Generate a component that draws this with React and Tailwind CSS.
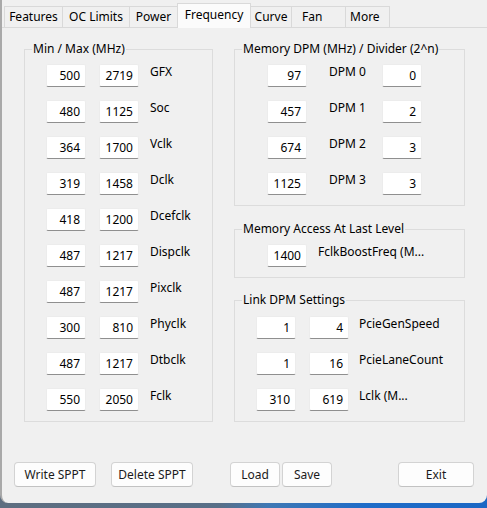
import React from 'react';

const tabs = [
    { name: 'Features', w: 'w-[59px]', cls: 'justify-center' },
    { name: 'OC Limits', w: 'w-[67px]', cls: 'justify-center' },
    { name: 'Power', w: 'w-[48px]', cls: 'justify-center' },
    { name: 'Frequency', w: 'w-[74px]', cls: 'justify-center', active: true },
    { name: 'Curve', w: 'w-[41px]', cls: 'justify-center' },
    { name: 'Fan', w: 'w-[54px]', cls: 'pl-[10px]' },
    { name: 'More', w: 'w-[44px]', cls: 'pl-[4px]' },
];

const clocks = [
    ['500', '2719', 'GFX'],
    ['480', '1125', 'Soc'],
    ['364', '1700', 'Vclk'],
    ['319', '1458', 'Dclk'],
    ['418', '1200', 'Dcefclk'],
    ['487', '1217', 'Dispclk'],
    ['487', '1217', 'Pixclk'],
    ['300', '810', 'Phyclk'],
    ['487', '1217', 'Dtbclk'],
    ['550', '2050', 'Fclk'],
];

const memDpm = [
    ['97', 'DPM 0', '0'],
    ['457', 'DPM 1', '2'],
    ['674', 'DPM 2', '3'],
    ['1125', 'DPM 3', '3'],
];

const linkDpm = [
    ['1', '4', 'PcieGenSpeed'],
    ['1', '16', 'PcieLaneCount'],
    ['310', '619', 'Lclk (M...'],
];

const Field = ({ value, className = '' }) => (
    <div className={`w-[40px] h-[23px] shrink-0 bg-white border border-[#ececec] border-b-[#8f8f8f] rounded-[2px] text-right pr-[5px] leading-[22px] ${className}`}>
        {value}
    </div>
);

const Group = ({ title, className = '', children }) => (
    <div className={`relative border border-[#dcdcdc] ${className}`}>
        <span className="absolute left-[7px] top-[-9px] px-[1px] bg-[#f0f0f0] leading-[16px] whitespace-nowrap">{title}</span>
        {children}
    </div>
);

const Button = ({ label, className = '' }) => (
    <button className={`h-[25px] bg-[#fdfdfd] border border-[#d3d3d3] border-b-[#c2c2c2] rounded-[4px] text-[12px] text-[#1b1b1b] ${className}`}>
        {label}
    </button>
);

export default function App() {
    return (
        <div className="w-[487px] h-[508px] overflow-hidden bg-[linear-gradient(90deg,#5e6e80_0%,#586f88_45%,#3f78b4_55%,#1f6cc8_75%,#1b67c4_100%)] font-['Noto_Sans',sans-serif] text-[12px] text-black">
            <div className="w-[487px] h-[503px] bg-[#f0f0f0] border-l-[2px] border-[#a9a9a9] rounded-bl-[8px] rounded-br-[8px] flex flex-col">
                {/* Tab strip */}
                <div className="flex items-end h-[28px] pl-[2px] border-b border-[#d9d9d9]">
                    {tabs.map(t => (
                        <div
                            key={t.name}
                            className={`${t.w} flex items-center border-t border-r border-[#d9d9d9] first:border-l ${t.cls} ${t.active
                                ? 'h-[25px] bg-[#fbfbfb] -mb-px pb-[3px] border-l -ml-px'
                                : 'h-[21px] bg-[#f0f0f0]'}`}
                        >
                            {t.name}
                        </div>
                    ))}
                </div>

                {/* Tab page */}
                <div className="flex pl-[22px] mt-[21px]">
                    <Group title="Min / Max (MHz)" className="w-[189px] h-[373px] pt-[14px] pl-[21px]">
                        <div className="flex flex-col gap-[13px]">
                            {clocks.map(([min, max, name]) => (
                                <div key={name} className="flex items-start">
                                    <Field value={min} />
                                    <Field value={max} className="ml-[13px]" />
                                    <span className="ml-[11px] leading-[16px]">{name}</span>
                                </div>
                            ))}
                        </div>
                    </Group>

                    <div className="ml-[21px] flex flex-col">
                        <Group title="Memory DPM (MHz) / Divider (2^n)" className="w-[231px] h-[157px] pt-[14px] pl-[32px]">
                            <div className="flex flex-col gap-[13px]">
                                {memDpm.map(([mhz, name, div]) => (
                                    <div key={name} className="flex items-start">
                                        <Field value={mhz} />
                                        <span className="ml-[22px] w-[53px] leading-[16px]">{name}</span>
                                        <Field value={div} />
                                    </div>
                                ))}
                            </div>
                        </Group>

                        <Group title="Memory Access At Last Level" className="w-[231px] h-[49px] mt-[23px] pt-[14px] pl-[32px]">
                            <div className="flex items-start">
                                <Field value="1400" />
                                <span className="ml-[11px] leading-[16px]">FclkBoostFreq (M...</span>
                            </div>
                        </Group>

                        <Group title="Link DPM Settings" className="w-[231px] h-[122px] mt-[22px] pt-[15px] pl-[21px]">
                            <div className="flex flex-col gap-[13px]">
                                {linkDpm.map(([a, b, name]) => (
                                    <div key={name} className="flex items-start">
                                        <Field value={a} />
                                        <Field value={b} className="ml-[13px]" />
                                        <span className="ml-[10px] leading-[16px]">{name}</span>
                                    </div>
                                ))}
                            </div>
                        </Group>
                    </div>
                </div>

                {/* Bottom buttons */}
                <div className="flex mt-[40px] pl-[12px]">
                    <Button label="Write SPPT" className="w-[82px]" />
                    <Button label="Delete SPPT" className="w-[82px] ml-[15px]" />
                    <Button label="Load" className="w-[50px] ml-[37px]" />
                    <Button label="Save" className="w-[50px] ml-[2px]" />
                    <Button label="Exit" className="w-[76px] ml-[66px]" />
                </div>
            </div>
        </div>
    );
}
